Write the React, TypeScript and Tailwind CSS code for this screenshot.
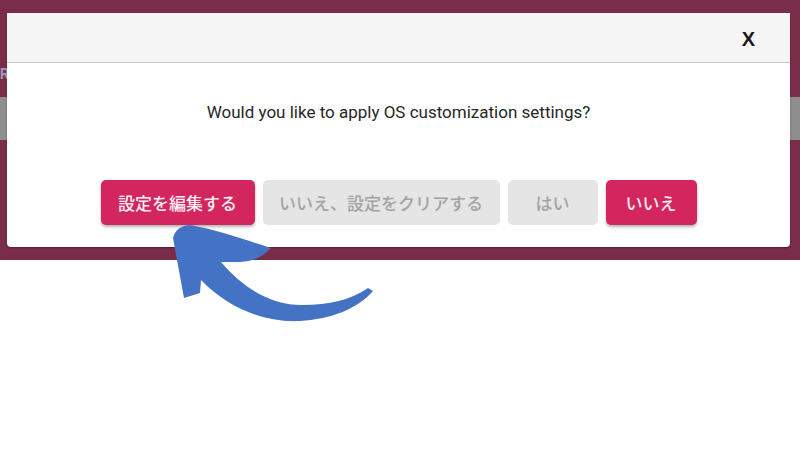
import React from "react"

const jp = { fontFamily: '"Noto Sans CJK JP", "Noto Sans", sans-serif' }

function Button({ label, primary, width }: { label: string; primary?: boolean; width: string }) {
    return (
        <button
            style={jp}
            className={
                primary
                    ? `${width} h-[45px] rounded-[5px] bg-[#d3255e] text-[17px] font-medium text-[#fdeef3] shadow-[0_2px_3px_rgba(0,0,0,0.3)]`
                    : `${width} h-[45px] rounded-[5px] bg-[#e5e5e5] text-[17px] font-medium text-[#a3a3a3]`
            }
        >
            {label}
        </button>
    )
}

export default function App() {
    return (
        <div className="relative w-[800px] h-[450px] bg-white overflow-hidden">
            {/* app behind the modal */}
            <div className="h-[260px] bg-[#7a2d48] flex flex-col">
                <div className="h-[67px]" />
                <div
                    className="ml-0 h-[14px] text-[14px] leading-[14px] font-bold text-[#a59ab8]"
                    style={{ fontFamily: '"Roboto", sans-serif' }}
                >
                    R
                </div>
                <div className="mt-[16px] h-[43px] bg-[#8e8e8e]" />
            </div>

            {/* modal */}
            <div className="absolute left-[7px] top-[13px] w-[783px] h-[234px] bg-white rounded-b-[4px] shadow-[0_1px_2px_rgba(0,0,0,0.35)] flex flex-col">
                <div className="h-[50px] bg-[#f5f5f5] border-b border-[#c9c9c9] flex items-center justify-end pr-[35px] pt-[2px]">
                    <span
                        className="text-[20px] font-bold text-[#1a1a1a]"
                        style={{ fontFamily: '"Liberation Sans", sans-serif' }}
                    >
                        X
                    </span>
                </div>
                <div className="flex flex-col items-center pt-[37px]">
                    <p
                        className="text-[17px] leading-[24px] text-[#262626]"
                        style={{ fontFamily: '"Roboto", sans-serif' }}
                    >
                        Would you like to apply OS customization settings?
                    </p>
                    <div className="mt-[56px] flex gap-2">
                        <Button label="設定を編集する" primary width="w-[154px]" />
                        <Button label="いいえ、設定をクリアする" width="w-[237px]" />
                        <Button label="はい" width="w-[90px]" />
                        <Button label="いいえ" primary width="w-[91px]" />
                    </div>
                </div>
            </div>

            {/* pointing arrow */}
            <svg className="absolute left-0 top-0 pointer-events-none" width="800" height="450" viewBox="0 0 800 450">
                <path
                    fill="#4472c4"
                    d="M 173 238 Q 176 226 190 225 C 218 230 246 240 271 248 Q 258 262 240 262 L 221 262 C 245 290 272 305 302 305 C 330 305 350 300 368 288 L 373 291 C 356 310 330 319 300 321 C 262 323 226 306 201 280 L 200 293 L 184 298 Z"
                />
            </svg>
        </div>
    )
}
